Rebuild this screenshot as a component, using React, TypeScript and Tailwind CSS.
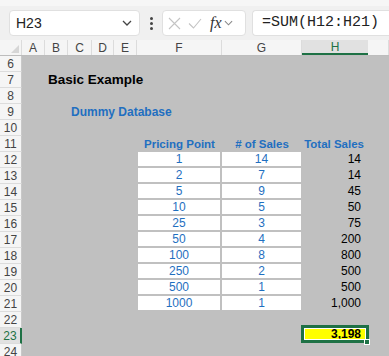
import React from "react";

const cols = [
  { key: "", w: 22 },
  { key: "A", w: 23 },
  { key: "B", w: 23 },
  { key: "C", w: 24 },
  { key: "D", w: 22 },
  { key: "E", w: 23 },
  { key: "F", w: 85 },
  { key: "G", w: 80 },
  { key: "H", w: 66 },
  { key: "", w: 21 },
];

const data: [string, string, string][] = [
  ["1", "14", "14"],
  ["2", "7", "14"],
  ["5", "9", "45"],
  ["10", "5", "50"],
  ["25", "3", "75"],
  ["50", "4", "200"],
  ["100", "8", "800"],
  ["250", "2", "500"],
  ["500", "1", "500"],
  ["1000", "1", "1,000"],
];

const gridCols = "grid grid-cols-[22px_23px_23px_24px_22px_23px_85px_80px_66px_1fr]";

function RowHead({ n, active }: { n: number; active?: boolean }) {
  return (
    <div
      className={
        "h-4 flex items-center justify-center text-[12px] leading-none border-b border-[#dcdcdc] " +
        (active
          ? "bg-[#e1e1e1] text-[#1e7145] border-r-2 border-r-[#1e7145]"
          : "bg-[#f5f5f5] text-[#444] border-r border-r-[#c8c8c8]")
      }
    >
      {n}
    </div>
  );
}

function Toolbar() {
  return (
    <div className="h-10 bg-[#f0f0f0] border-t-[6px] border-[#f6f6f6] flex items-center pl-[9px]">
      <div className="w-[131px] h-[26px] bg-white rounded border border-[#e0e0e0] flex items-center justify-between pl-[6px] pr-[7px]">
        <span className="text-[14px] text-[#222]">H23</span>
        <svg width="10" height="6" viewBox="0 0 10 6" fill="none" stroke="#444" strokeWidth="1.3">
          <path d="M1 1l4 4 4-4" />
        </svg>
      </div>
      <div className="w-[22px] flex flex-col items-center gap-[2px]">
        <span className="w-[3px] h-[3px] rounded-full bg-[#444]" />
        <span className="w-[3px] h-[3px] rounded-full bg-[#444]" />
        <span className="w-[3px] h-[3px] rounded-full bg-[#444]" />
      </div>
      <div className="w-[84px] h-[26px] bg-white rounded border border-[#e0e0e0] flex items-center pl-[5px] gap-[7px]">
        <svg width="13" height="13" viewBox="0 0 13 13" stroke="#c4c4c4" strokeWidth="1.1">
          <path d="M1 1l11 11M12 1L1 12" />
        </svg>
        <svg width="14" height="11" viewBox="0 0 14 11" fill="none" stroke="#c4c4c4" strokeWidth="1.1">
          <path d="M1 5.5l4.5 4.5L13 1" />
        </svg>
        <span className="italic text-[16px] leading-none text-[#333] [font-family:'Liberation_Serif',serif] ml-[1px]">
          fx
        </span>
        <svg width="9" height="6" viewBox="0 0 10 6" fill="none" stroke="#888" strokeWidth="1.2" className="-ml-[5px]">
          <path d="M1 1l4 4 4-4" />
        </svg>
      </div>
      <div className="ml-[6px] flex-1 h-[26px] bg-white rounded-l border border-r-0 border-[#e0e0e0] flex items-center pl-[9px]">
        <span className="text-[15px] text-[#222] [font-family:'Liberation_Mono',monospace]">=SUM(H12:H21)</span>
      </div>
    </div>
  );
}

export default function App() {
  const rows = [6, 7, 8, 9, 10, 11, 12, 13, 14, 15, 16, 17, 18, 19, 20, 21, 22, 23, 24];
  return (
    <div className="w-[389px] h-[356px] overflow-hidden bg-[#c0c0c0] [font-family:'Liberation_Sans',Arial,sans-serif]">
      <Toolbar />
      <div className={gridCols + " h-4 bg-[#f5f5f5] border-b border-[#bdbdbd]"}>
        {cols.map((c, i) =>
          i === 0 ? (
            <div key={i} className="relative border-r border-[#dcdcdc]">
              <svg width="8" height="8" viewBox="0 0 8 8" className="absolute right-[2px] bottom-[2px]">
                <path d="M8 0V8H0Z" fill="#d6d6d6" />
              </svg>
            </div>
          ) : c.key === "H" ? (
            <div key={i} className="bg-[#e1e1e1] border-b-2 border-[#1e7145] flex items-center justify-center text-[12px] text-[#1e7145] leading-none">
              H
            </div>
          ) : (
            <div key={i} className="border-r border-[#dcdcdc] flex items-center justify-center text-[12px] text-[#444] leading-none">
              {c.key}
            </div>
          )
        )}
      </div>
      {rows.map((r) => {
        const d = r >= 12 && r <= 21 ? data[r - 12] : null;
        return (
          <div key={r} className={gridCols + " h-4 items-start"}>
            <RowHead n={r} active={r === 23} />
            <div className="col-span-5 relative h-4">
              {r === 7 && (
                <span className="absolute left-[26px] top-0 h-4 flex items-center text-[13.5px] font-bold text-black whitespace-nowrap">
                  Basic Example
                </span>
              )}
              {r === 9 && (
                <span className="absolute left-[49px] top-0 h-4 flex items-center text-[12px] font-bold text-[#1f6fc0] whitespace-nowrap">
                  Dummy Database
                </span>
              )}
            </div>
            {r === 11 ? (
              <>
                <div className="h-4 flex items-center justify-center text-[11.5px] font-bold text-[#1f6fc0] pt-[2px]">Pricing Point</div>
                <div className="h-4 flex items-center justify-center text-[11.5px] font-bold text-[#1f6fc0] pt-[2px]">
                  # of Sales
                </div>
                <div className="h-4 flex items-center justify-end pr-[4px] text-[11.5px] font-bold text-[#1f6fc0] pt-[2px] whitespace-nowrap">
                  Total Sales
                </div>
                <div />
              </>
            ) : d ? (
              <>
                <div className="h-[14px] bg-white ml-[1px] mr-[2px] flex items-center justify-center text-[12px] text-[#1f6fc0]">
                  {d[0]}
                </div>
                <div className="h-[14px] bg-white mr-[1px] flex items-center justify-center text-[12px] text-[#1f6fc0]">
                  {d[1]}
                </div>
                <div className="h-[14px] flex items-center justify-end pr-[7px] text-[12px] text-black">{d[2]}</div>
                <div />
              </>
            ) : r === 23 ? (
              <>
                <div />
                <div />
                <div className="relative h-4">
                  <div className="absolute -left-[1px] -right-[1px] -top-[3px] bottom-[1px] border-[3px] border-[#1e7145] bg-[#ffff00] outline outline-1 outline-white -outline-offset-[4px] flex items-center justify-end pr-[5px] text-[12px] font-bold text-black">
                    3,198
                  </div>
                  <div className="absolute -right-[2px] -bottom-[1px] w-[6px] h-[6px] bg-[#1e7145] border border-white" />
                </div>
                <div />
              </>
            ) : (
              <>
                <div />
                <div />
                <div />
                <div />
              </>
            )}
          </div>
        );
      })}
    </div>
  );
}
